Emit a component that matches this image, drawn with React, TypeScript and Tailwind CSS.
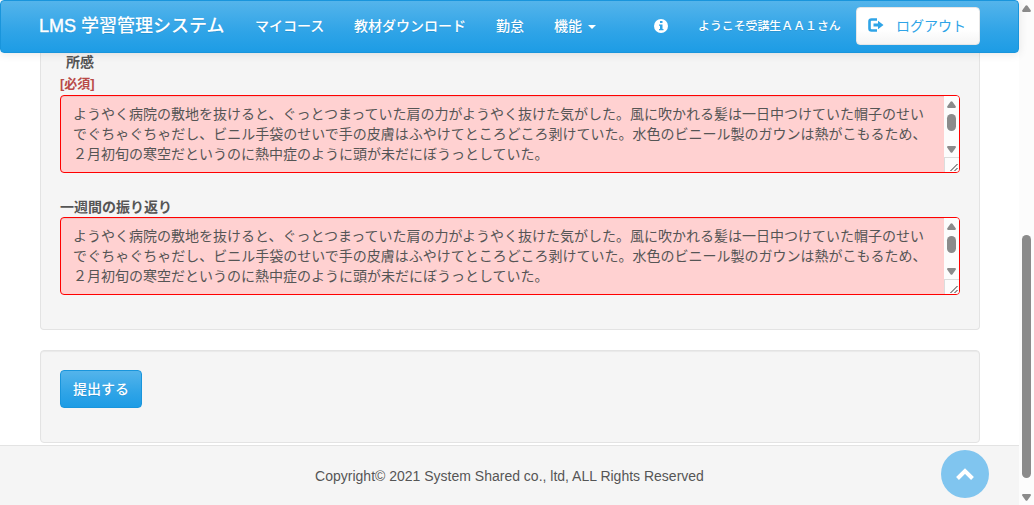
const REPORT =
  'ようやく病院の敷地を抜けると、ぐっとつまっていた肩の力がようやく抜けた気がした。風に吹かれる髪は一日中つけていた帽子のせいでぐちゃぐちゃだし、ビニル手袋のせいで手の皮膚はふやけてところどころ剥けていた。水色のビニール製のガウンは熱がこもるため、２月初旬の寒空だというのに熱中症のように頭が未だにぼうっとしていた。';

function Arrow({ down = false }: { down?: boolean }) {
  return (
    <svg width="9" height="7" viewBox="0 0 9 7" fill="#8b8b8b" className="block shrink-0">
      {down ? (
        <path d="M1 0H8Q9.4 .3 8.7 1.7L5.5 6.3Q4.5 7.4 3.5 6.3L.3 1.7Q-.4 .3 1 0Z" />
      ) : (
        <path d="M1 7H8Q9.4 6.7 8.7 5.3L5.5 .7Q4.5-.4 3.5 .7L.3 5.3Q-.4 6.7 1 7Z" />
      )}
    </svg>
  );
}

function ReportField() {
  return (
    <div className="flex h-[78px] w-[900px] overflow-hidden rounded-[4px] border border-[#ff0000] bg-[#ffd1d1] shadow-[inset_0_1px_1px_rgba(0,0,0,0.075)]">
      <p className="w-[883px] shrink-0 overflow-hidden pt-2 pl-3 pr-4 text-sm leading-5 text-[#555555] break-all">{REPORT}</p>
      <div className="flex w-[15px] shrink-0 flex-col items-center bg-[#fcfcfc] pt-[5px]">
        <Arrow />
        <div className="mt-[6px] h-[17px] w-[9px] shrink-0 rounded-full bg-[#8b8b8b]" />
        <div className="mt-[15px]">
          <Arrow down />
        </div>
        <div className="mt-1 flex h-[15px] w-[15px] shrink-0 items-end justify-end border-t border-l border-[#dcdcdc] pr-px">
          <svg width="8" height="9" viewBox="0 0 8 9" stroke="#333" strokeWidth="1" className="block">
            <path d="M.5 8L7.5 1M4.5 8L7.5 5" />
          </svg>
        </div>
      </div>
    </div>
  );
}

function Header() {
  return (
    <header className="relative z-10 flex h-[53px] w-[1019px] shrink-0 items-center rounded-[4px] border border-[#1995dc] bg-[linear-gradient(#54b4eb,#2fa4e7_60%,#1d9ce5)] pb-[2px] pl-[38px] text-sm font-medium text-white shadow-[0_1px_10px_rgba(0,0,0,0.1)] [text-shadow:0_1px_0_rgba(0,0,0,0.1)]">
      <a className="w-[216px] whitespace-nowrap text-lg leading-5">
        <span className="[-webkit-text-stroke:0.4px_white]">LMS</span> 学習管理システム
      </a>
      <nav className="flex w-[399px] items-center whitespace-nowrap">
        <a className="w-[99px]">マイコース</a>
        <a className="w-[142px]">教材ダウンロード</a>
        <a className="w-[58px]">勤怠</a>
        <a className="flex items-center">
          機能
          <span className="mt-[2px] ml-[6px] border-x-4 border-t-4 border-x-transparent border-t-white" />
        </a>
      </nav>
      <svg width="14" height="14" viewBox="0 0 14 14" className="shrink-0">
        <circle cx="7" cy="7" r="7" fill="#fff" />
        <path d="M6 2h2.5v2H6zM5 5.5h3.5V10H9.5v1.3H5V10h1V6.8H5z" fill="#2fa4e7" />
      </svg>
      <span className="ml-[30px] mt-[2px] w-[158px] whitespace-nowrap text-[11.9px]">ようこそ受講生ＡＡ１さん</span>
      <button className="flex h-[38px] w-[124px] items-center rounded-[4px] border border-[#e6e6e6] bg-[linear-gradient(#ffffff,#ffffff_60%,#f5f5f5)] pl-[11px] font-normal text-[#2fa4e7]">
        <svg width="16" height="14" viewBox="0 0 16 14" className="-mt-[2px]">
          <path d="M9 1.5H3.5Q1.5 1.5 1.5 3.5V10.5Q1.5 12.5 3.5 12.5H9" fill="none" stroke="#2fa4e7" strokeWidth="2.6" />
          <path d="M5.5 5.5H10V2.7L15.5 7L10 11.3V8.5H5.5z" fill="#2fa4e7" />
        </svg>
        <span className="ml-[12px] mt-px whitespace-nowrap">ログアウト</span>
      </button>
    </header>
  );
}

export default function App() {
  return (
    <div className="flex h-[505px] w-[1034px] overflow-hidden bg-white font-['Liberation_Sans','Noto_Sans_CJK_JP',sans-serif] text-sm leading-5 text-[#555555]">
      <div className="flex w-[1019px] shrink-0 flex-col">
        <Header />
        <main className="flex flex-col pl-10">
          <section className="h-[277px] w-[940px] rounded-b-[4px] border border-t-0 border-[#e3e3e3] bg-[#f5f5f5] pl-[19px]">
            <div className="-mt-px h-5 pl-[6px] font-bold">所感</div>
            <div className="mt-[2px] h-[21px] text-[13px] font-bold leading-5 text-[#b94a48]">[必須]</div>
            <ReportField />
            <div className="mt-6 h-5 font-bold">一週間の振り返り</div>
            <ReportField />
          </section>
          <section className="mt-5 h-[93px] w-[940px] rounded-[4px] border border-[#e3e3e3] bg-[#f5f5f5] pt-[19px] pl-[19px] shadow-[inset_0_1px_1px_rgba(0,0,0,0.05)]">
            <button className="block h-[38px] w-[82px] rounded-[4px] border border-[#1995dc] bg-[linear-gradient(#54b4eb,#2fa4e7_60%,#1d9ce5)] font-medium text-white [text-shadow:0_1px_0_rgba(0,0,0,0.1)]">
              提出する
            </button>
          </section>
        </main>
        <footer className="relative mt-[2px] flex h-[60px] items-center justify-center border-t border-[#e3e3e3] bg-[#f5f5f5]">
          <span>Copyright© 2021 System Shared co., ltd, ALL Rights Reserved</span>
          <button className="absolute top-1 right-[30px] flex size-12 items-center justify-center rounded-full bg-[#80c5ef]">
            <svg width="20" height="14" viewBox="0 0 20 14" fill="none" stroke="#fff" strokeWidth="4">
              <path d="M2.5 11.5L10 4L17.5 11.5" />
            </svg>
          </button>
        </footer>
      </div>
      <aside className="flex w-[15px] shrink-0 flex-col items-center bg-[#fcfcfc] pt-[5px]">
        <Arrow />
        <div className="mt-[223px] h-[243px] w-[9px] shrink-0 rounded-full bg-[#8b8b8b]" />
        <div className="mt-4">
          <Arrow down />
        </div>
      </aside>
    </div>
  );
}
